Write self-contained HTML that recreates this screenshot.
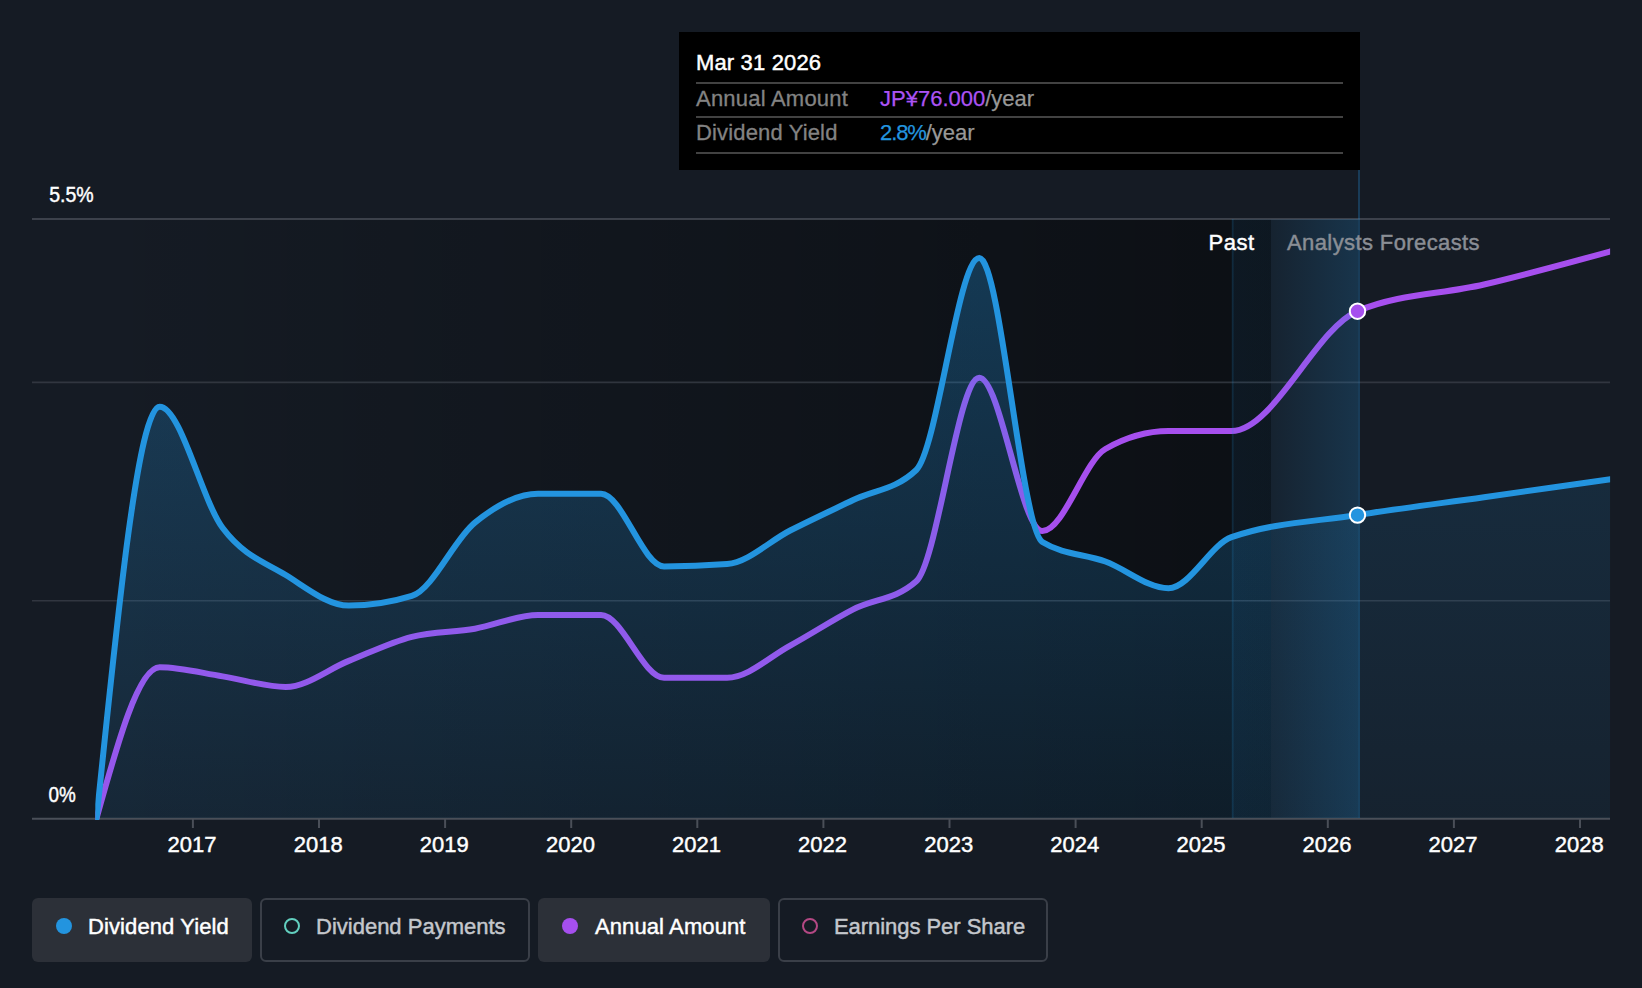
<!DOCTYPE html>
<html><head><meta charset="utf-8"><title>Dividend chart</title>
<style>
html,body{margin:0;padding:0;background:#151b24;}
body{width:1642px;height:988px;overflow:hidden;position:relative;font-family:"Liberation Sans",sans-serif;}
svg{position:absolute;left:0;top:0;}
svg text{font-family:"Liberation Sans",sans-serif;font-size:22px;fill:#fff;stroke:#fff;stroke-width:0.45px;}
.tip,.leg{-webkit-text-stroke:0.45px;}
.tip{position:absolute;left:679px;top:32px;width:681px;height:138px;background:#000;color:#fff;font-size:22px;}
.tip .hd{position:absolute;left:17px;top:18px;line-height:26px;}
.tip .ln{position:absolute;left:17px;width:647px;height:2px;background:#424242;}
.tip .row{position:absolute;left:17px;line-height:26px;color:#838383;white-space:nowrap;-webkit-text-stroke:0.3px;}
.tip .val{position:absolute;left:201px;line-height:26px;white-space:nowrap;color:#989898;-webkit-text-stroke:0.25px;}
.leg{position:absolute;top:898px;height:64px;box-sizing:border-box;border-radius:6px;font-size:22px;line-height:26px;color:#fff;white-space:nowrap;}
.leg.on{background:#2c3038;}
.leg.off{border:2px solid #3a3f48;color:#c4c7cc;}
.leg span.t{position:absolute;top:16px;}
.leg i{position:absolute;box-sizing:border-box;border-radius:50%;}
</style></head><body>
<svg width="1642" height="988" viewBox="0 0 1642 988">
<defs>
<linearGradient id="gpast" x1="0" x2="1" y1="0" y2="0"><stop offset="0" stop-color="#000" stop-opacity="0"/><stop offset="1" stop-color="#000" stop-opacity="0.44"/></linearGradient>
<linearGradient id="ghov" x1="0" x2="1" y1="0" y2="0"><stop offset="0" stop-color="#2394df" stop-opacity="0.07"/><stop offset="0.31" stop-color="#2394df" stop-opacity="0.065"/><stop offset="1" stop-color="#2394df" stop-opacity="0.21"/></linearGradient>
<linearGradient id="garea" x1="0" x2="0" y1="0" y2="1"><stop offset="0" stop-color="#2394df" stop-opacity="0.30"/><stop offset="1" stop-color="#2394df" stop-opacity="0.10"/></linearGradient>
<clipPath id="cpast"><rect x="0" y="0" width="1271" height="988"/></clipPath><clipPath id="cfut"><rect x="1271" y="0" width="500" height="988"/></clipPath>
<clipPath id="clip"><rect x="95.3" y="200" width="1514.8" height="620"/></clipPath>
</defs>
<!-- past shading -->
<rect x="96" y="219" width="1175" height="599" fill="url(#gpast)"/>
<!-- grid -->
<g stroke="#3b4049" stroke-width="1.6">
<line x1="32" x2="1610" y1="219" y2="219" stroke="#4a4f58"/>
<line x1="32" x2="1610" y1="382.4" y2="382.4" stroke-opacity="0.75"/>
<line x1="32" x2="1610" y1="600.7" y2="600.7" stroke-opacity="0.75"/>
</g>
<line x1="32" x2="1610" y1="818.8" y2="818.8" stroke="#4a4f58" stroke-width="2"/>
<g clip-path="url(#clip)">
<path d="M96.60,818.00C117.62,742.65 138.63,667.30 159.65,667.30C180.67,667.30 201.68,673.13 222.70,676.40C243.72,679.67 264.73,686.90 285.75,686.90C306.77,686.90 327.78,669.25 348.80,660.90C369.82,652.55 390.83,642.17 411.85,636.80C432.87,631.43 453.88,632.33 474.90,628.70C495.92,625.07 516.93,615.00 537.95,615.00C558.97,615.00 579.98,615.00 601.00,615.00C622.02,615.00 643.03,677.70 664.05,677.70C685.07,677.70 706.08,677.70 727.10,677.70C748.12,677.70 769.13,656.98 790.15,645.60C811.17,634.22 832.18,620.12 853.20,609.40C874.22,598.68 895.23,600.03 916.25,581.30C937.27,562.57 958.28,377.70 979.30,377.70C1000.32,377.70 1021.33,531.10 1042.35,531.10C1063.37,531.10 1084.38,460.93 1105.40,449.00C1126.42,437.07 1147.43,431.10 1168.45,431.10C1189.47,431.10 1210.48,431.10 1231.50,431.10C1273.53,431.10 1315.57,328.62 1357.60,311.00C1399.73,293.33 1441.87,294.43 1484.00,284.50C1526.13,274.57 1568.27,262.98 1610.40,251.40" fill="none" stroke="#a64fee" stroke-width="6" stroke-linejoin="round" stroke-linecap="round"/>
<g clip-path="url(#cpast)"><path d="M96.60,818.00C117.62,612.35 138.63,406.70 159.65,406.70C180.67,406.70 201.68,499.95 222.70,528.00C243.72,556.05 264.73,562.07 285.75,575.00C306.77,587.93 327.78,605.60 348.80,605.60C369.82,605.60 390.83,602.37 411.85,595.90C432.87,589.43 453.88,539.62 474.90,522.60C495.92,505.58 516.93,493.80 537.95,493.80C558.97,493.80 579.98,493.80 601.00,493.80C622.02,493.80 643.03,566.40 664.05,566.40C685.07,566.40 706.08,565.63 727.10,564.10C748.12,562.57 769.13,541.18 790.15,530.50C811.17,519.82 832.18,510.08 853.20,500.00C874.22,489.92 895.23,490.00 916.25,470.00C937.27,450.00 958.28,258.10 979.30,258.10C1000.32,258.10 1021.33,529.00 1042.35,542.00C1063.37,555.00 1084.38,553.78 1105.40,561.50C1126.42,569.22 1147.43,588.30 1168.45,588.30C1189.47,588.30 1210.48,544.60 1231.50,537.20C1273.53,522.40 1315.57,521.66 1357.60,515.00C1399.73,508.32 1441.87,503.15 1484.00,497.20C1526.13,491.25 1568.27,485.27 1610.40,479.30L1610.40,818L96.60,818Z" fill="url(#garea)"/></g>
<g clip-path="url(#cfut)"><path d="M96.60,818.00C117.62,612.35 138.63,406.70 159.65,406.70C180.67,406.70 201.68,499.95 222.70,528.00C243.72,556.05 264.73,562.07 285.75,575.00C306.77,587.93 327.78,605.60 348.80,605.60C369.82,605.60 390.83,602.37 411.85,595.90C432.87,589.43 453.88,539.62 474.90,522.60C495.92,505.58 516.93,493.80 537.95,493.80C558.97,493.80 579.98,493.80 601.00,493.80C622.02,493.80 643.03,566.40 664.05,566.40C685.07,566.40 706.08,565.63 727.10,564.10C748.12,562.57 769.13,541.18 790.15,530.50C811.17,519.82 832.18,510.08 853.20,500.00C874.22,489.92 895.23,490.00 916.25,470.00C937.27,450.00 958.28,258.10 979.30,258.10C1000.32,258.10 1021.33,529.00 1042.35,542.00C1063.37,555.00 1084.38,553.78 1105.40,561.50C1126.42,569.22 1147.43,588.30 1168.45,588.30C1189.47,588.30 1210.48,544.60 1231.50,537.20C1273.53,522.40 1315.57,521.66 1357.60,515.00C1399.73,508.32 1441.87,503.15 1484.00,497.20C1526.13,491.25 1568.27,485.27 1610.40,479.30L1610.40,818L96.60,818Z" fill="url(#garea)" opacity="0.6"/></g>
<path d="M96.60,818.00C117.62,612.35 138.63,406.70 159.65,406.70C180.67,406.70 201.68,499.95 222.70,528.00C243.72,556.05 264.73,562.07 285.75,575.00C306.77,587.93 327.78,605.60 348.80,605.60C369.82,605.60 390.83,602.37 411.85,595.90C432.87,589.43 453.88,539.62 474.90,522.60C495.92,505.58 516.93,493.80 537.95,493.80C558.97,493.80 579.98,493.80 601.00,493.80C622.02,493.80 643.03,566.40 664.05,566.40C685.07,566.40 706.08,565.63 727.10,564.10C748.12,562.57 769.13,541.18 790.15,530.50C811.17,519.82 832.18,510.08 853.20,500.00C874.22,489.92 895.23,490.00 916.25,470.00C937.27,450.00 958.28,258.10 979.30,258.10C1000.32,258.10 1021.33,529.00 1042.35,542.00C1063.37,555.00 1084.38,553.78 1105.40,561.50C1126.42,569.22 1147.43,588.30 1168.45,588.30C1189.47,588.30 1210.48,544.60 1231.50,537.20C1273.53,522.40 1315.57,521.66 1357.60,515.00C1399.73,508.32 1441.87,503.15 1484.00,497.20C1526.13,491.25 1568.27,485.27 1610.40,479.30" fill="none" stroke="#2394df" stroke-width="6" stroke-linejoin="round" stroke-linecap="round"/>
</g>
<rect x="1232" y="219" width="126" height="599" fill="url(#ghov)"/>
<line x1="1232.7" x2="1232.7" y1="219" y2="818" stroke="#2394df" stroke-opacity="0.14" stroke-width="2"/>
<line x1="1359" x2="1359" y1="170" y2="818" stroke="#2394df" stroke-opacity="0.28" stroke-width="2"/>
<line x1="192.9" x2="192.9" y1="819" y2="828" stroke="#4a4f58" stroke-width="2"/><line x1="319.0" x2="319.0" y1="819" y2="828" stroke="#4a4f58" stroke-width="2"/><line x1="445.1" x2="445.1" y1="819" y2="828" stroke="#4a4f58" stroke-width="2"/><line x1="571.2" x2="571.2" y1="819" y2="828" stroke="#4a4f58" stroke-width="2"/><line x1="697.3" x2="697.3" y1="819" y2="828" stroke="#4a4f58" stroke-width="2"/><line x1="823.4" x2="823.4" y1="819" y2="828" stroke="#4a4f58" stroke-width="2"/><line x1="949.5" x2="949.5" y1="819" y2="828" stroke="#4a4f58" stroke-width="2"/><line x1="1075.6" x2="1075.6" y1="819" y2="828" stroke="#4a4f58" stroke-width="2"/><line x1="1201.7" x2="1201.7" y1="819" y2="828" stroke="#4a4f58" stroke-width="2"/><line x1="1327.8" x2="1327.8" y1="819" y2="828" stroke="#4a4f58" stroke-width="2"/><line x1="1453.9" x2="1453.9" y1="819" y2="828" stroke="#4a4f58" stroke-width="2"/><line x1="1580.0" x2="1580.0" y1="819" y2="828" stroke="#4a4f58" stroke-width="2"/>
<circle cx="1357.5" cy="311.2" r="7.7" fill="#a64fee" stroke="#fff" stroke-width="2"/>
<circle cx="1357.5" cy="515.1" r="7.7" fill="#2394df" stroke="#fff" stroke-width="2"/>
<g><text x="192.1" y="852" text-anchor="middle">2017</text><text x="318.2" y="852" text-anchor="middle">2018</text><text x="444.3" y="852" text-anchor="middle">2019</text><text x="570.4" y="852" text-anchor="middle">2020</text><text x="696.5" y="852" text-anchor="middle">2021</text><text x="822.6" y="852" text-anchor="middle">2022</text><text x="948.7" y="852" text-anchor="middle">2023</text><text x="1074.8" y="852" text-anchor="middle">2024</text><text x="1200.9" y="852" text-anchor="middle">2025</text><text x="1327.0" y="852" text-anchor="middle">2026</text><text x="1453.1" y="852" text-anchor="middle">2027</text><text x="1579.2" y="852" text-anchor="middle">2028</text></g>
<text x="49.2" y="202" textLength="44.5" lengthAdjust="spacingAndGlyphs">5.5%</text>
<text x="48.4" y="801.5" textLength="27.3" lengthAdjust="spacingAndGlyphs">0%</text>
<text x="1208.6" y="250" textLength="45.6" lengthAdjust="spacing">Past</text>
<text x="1287" y="250" style="fill:#8a8e95;stroke:#8a8e95" textLength="192.6" lengthAdjust="spacing">Analysts Forecasts</text>
</svg>
<div class="tip">
<div class="hd" style="letter-spacing:0.15px">Mar 31 2026</div>
<div class="ln" style="top:50px"></div>
<div class="row" style="top:54px;letter-spacing:0.22px">Annual Amount</div><div class="val" style="top:54px"><span style="color:#ac53f4">JP¥76.000</span>/year</div>
<div class="ln" style="top:84px"></div>
<div class="row" style="top:88px;letter-spacing:0.15px">Dividend Yield</div><div class="val" style="top:88px"><span style="color:#2394df;letter-spacing:-1.1px">2.8%</span>/year</div>
<div class="ln" style="top:120px"></div>
</div>
<div class="leg on" style="left:32px;width:220px"><i style="left:23.8px;top:19.8px;width:16.4px;height:16.4px;background:#2394df"></i><span class="t" style="left:56px;letter-spacing:0.1px">Dividend Yield</span></div>
<div class="leg off" style="left:260px;width:270px"><i style="left:21.9px;top:17.9px;width:16.2px;height:16.2px;border:2.7px solid #62cfbf"></i><span class="t" style="left:54px;top:14px">Dividend Payments</span></div>
<div class="leg on" style="left:538px;width:232px"><i style="left:23.8px;top:19.8px;width:16.4px;height:16.4px;background:#a64fee"></i><span class="t" style="left:57px;letter-spacing:0.1px">Annual Amount</span></div>
<div class="leg off" style="left:778px;width:270px"><i style="left:21.9px;top:17.9px;width:16.2px;height:16.2px;border:2.7px solid #b44884"></i><span class="t" style="left:54px;top:14px;letter-spacing:-0.05px">Earnings Per Share</span></div>
</body></html>
